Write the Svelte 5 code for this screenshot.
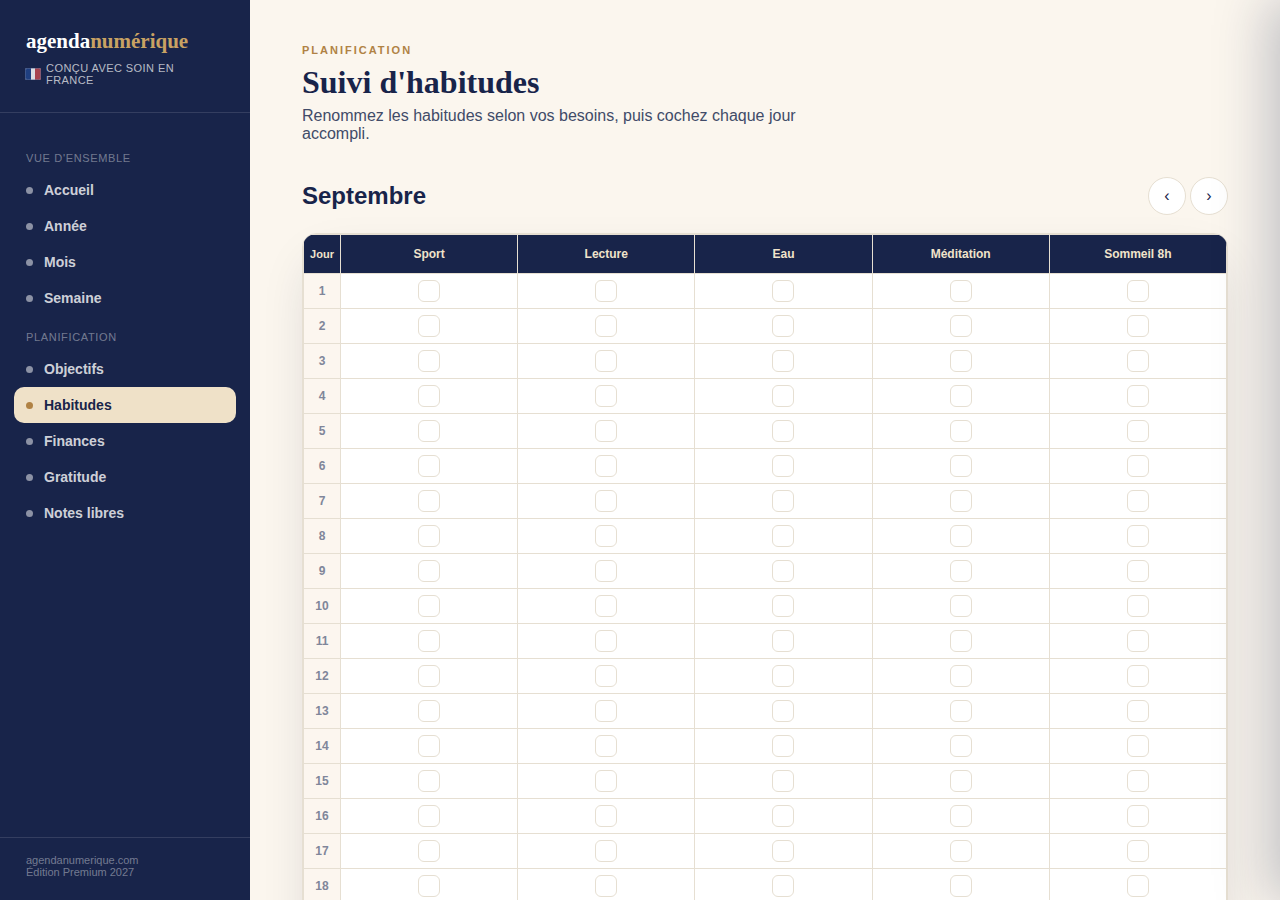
<script lang="ts">
    const groups = [
        { title: "Vue d'ensemble", items: ['Accueil', 'Année', 'Mois', 'Semaine'] },
        { title: 'Planification', items: ['Objectifs', 'Habitudes', 'Finances', 'Gratitude', 'Notes libres'] }
    ];
    const months = ['Janvier', 'Février', 'Mars', 'Avril', 'Mai', 'Juin', 'Juillet', 'Août', 'Septembre', 'Octobre', 'Novembre', 'Décembre'];

    let active = $state('Habitudes');
    let month = $state(8);
    let habits = $state(['Sport', 'Lecture', 'Eau', 'Méditation', 'Sommeil 8h']);
    let done: Record<string, boolean> = $state({});

    let days = $derived(new Date(2027, month + 1, 0).getDate());

    function move(step: number) {
        month = (month + step + 12) % 12;
    }

    function open(e: Event, item: string) {
        e.preventDefault();
        active = item;
    }
</script>

<div class="app">
    <aside class="sidebar">
        <header class="brand">
            <div class="logo">agenda<span>numérique</span></div>
            <div class="origin">
                <svg class="flag" viewBox="0 0 16 12" aria-hidden="true">
                    <rect width="16" height="12" rx="2" fill="#dcdde3" />
                    <path d="M2 0h4v12H2a2 2 0 0 1-2-2V2a2 2 0 0 1 2-2z" fill="#1f3f80" />
                    <path d="M10 0h4a2 2 0 0 1 2 2v8a2 2 0 0 1-2 2h-4z" fill="#a8434f" />
                    <rect x="0.5" y="0.5" width="15" height="11" rx="2" fill="none" stroke="#5f6f95" stroke-opacity="0.5" />
                </svg>
                <span>Conçu avec soin en France</span>
            </div>
        </header>

        <nav>
            {#each groups as group}
                <div class="group">{group.title}</div>
                {#each group.items as item}
                    <a href="#{item}" class:active={active === item} onclick={(e) => open(e, item)}>
                        <i class="dot"></i>{item}
                    </a>
                {/each}
            {/each}
        </nav>

        <footer>agendanumerique.com<br />Édition Premium 2027</footer>
    </aside>

    <main>
        <div class="eyebrow">Planification</div>
        <h1>Suivi d'habitudes</h1>
        <p class="intro">Renommez les habitudes selon vos besoins, puis cochez chaque jour accompli.</p>

        <div class="toolbar">
            <h2>{months[month]}</h2>
            <div class="arrows">
                <button onclick={() => move(-1)}>‹</button>
                <button onclick={() => move(1)}>›</button>
            </div>
        </div>

        <div class="card">
            <table>
                <thead>
                    <tr>
                        <th class="day">Jour</th>
                        {#each habits as _, h}
                            <th id="habit-{h}"><input type="text" bind:value={habits[h]} aria-labelledby="habit-{h}" /></th>
                        {/each}
                    </tr>
                </thead>
                <tbody>
                    {#each { length: days } as _, d}
                        <tr>
                            <td class="day" id="day-{d}">{d + 1}</td>
                            {#each habits as _, h}
                                <td>
                                    <input type="checkbox" bind:checked={done[`${month}-${d}-${h}`]} aria-labelledby="habit-{h} day-{d}" />
                                </td>
                            {/each}
                        </tr>
                    {/each}
                </tbody>
            </table>
        </div>
    </main>
</div>

<!-- closed drawer, parked just past the right edge -->
<div class="drawer"></div>

<style>
    :global(body) {
        background: #fbf6ee;
    }

    .app {
        display: flex;
        align-items: flex-start;
        font-family: "Liberation Sans", Arial, sans-serif;
        color: #18244a;
    }

    .sidebar {
        position: sticky;
        top: 0;
        flex: 0 0 250px;
        height: 100vh;
        display: flex;
        flex-direction: column;
        background: #18244a;
    }

    .brand {
        padding: 28px 26px 26px;
        border-bottom: 1px solid rgba(255, 255, 255, 0.12);
    }

    .logo {
        font-family: "Liberation Serif", Georgia, serif;
        font-size: 21px;
        font-weight: 700;
        line-height: 26px;
        color: #fff;
    }

    .logo span {
        color: #c9a263;
    }

    .origin {
        display: flex;
        align-items: center;
        gap: 5px;
        margin-top: 8px;
        font-size: 11px;
        line-height: 12px;
        letter-spacing: 0.04em;
        text-transform: uppercase;
        color: rgba(255, 255, 255, 0.7);
    }

    .flag {
        flex: none;
        width: 16px;
        height: 12px;
        margin-left: -1px;
    }

    nav {
        flex: 1;
        padding: 24px 14px;
        overflow-y: auto;
    }

    .group {
        padding: 15px 12px 8px;
        font-size: 11px;
        line-height: 12px;
        letter-spacing: 0.06em;
        text-transform: uppercase;
        color: rgba(255, 255, 255, 0.4);
    }

    nav a {
        display: flex;
        align-items: center;
        gap: 11px;
        height: 36px;
        padding: 0 12px;
        border-radius: 10px;
        font-size: 14px;
        font-weight: 700;
        color: rgba(255, 255, 255, 0.8);
        text-decoration: none;
    }

    .dot {
        width: 7px;
        height: 7px;
        border-radius: 50%;
        background: rgba(255, 255, 255, 0.5);
    }

    nav a.active {
        background: #efe1c8;
        color: #18244a;
    }

    nav a.active .dot {
        background: #b08244;
    }

    footer {
        padding: 16px 26px 22px;
        border-top: 1px solid rgba(255, 255, 255, 0.12);
        font-size: 11px;
        line-height: 12px;
        color: rgba(255, 255, 255, 0.4);
    }

    main {
        flex: 1;
        min-width: 0;
        padding: 44px 52px;
    }

    .eyebrow {
        font-size: 11px;
        font-weight: 700;
        line-height: 12px;
        letter-spacing: 2px;
        text-transform: uppercase;
        color: #b08244;
    }

    h1 {
        margin: 8px 0 7px;
        font-family: "Liberation Serif", Georgia, serif;
        font-size: 32px;
        line-height: 36px;
    }

    .intro {
        max-width: 520px;
        margin: 0;
        font-size: 16px;
        line-height: 18px;
        color: #414b68;
    }

    .toolbar {
        display: flex;
        align-items: center;
        justify-content: space-between;
        margin: 34px 0 18px;
    }

    h2 {
        margin: 0;
        font-size: 24px;
        line-height: 28px;
    }

    .arrows {
        display: flex;
        gap: 4px;
    }

    .arrows button {
        width: 38px;
        height: 38px;
        padding: 0;
        border: 1px solid #e6dfd2;
        border-radius: 50%;
        background: #fff;
        font-family: inherit;
        font-size: 16px;
        color: #18244a;
        cursor: pointer;
    }

    .card {
        border: 1px solid #e6dfd2;
        border-radius: 14px;
        overflow: hidden;
        background: #fff;
        box-shadow: 0 20px 50px -16px rgba(24, 36, 74, 0.2);
    }

    table {
        width: 100%;
        border-collapse: collapse;
        table-layout: fixed;
    }

    th,
    td {
        height: 22px;
        padding: 6px;
        border: 1px solid #e6dfd2;
        text-align: center;
        font-size: 0;
    }

    th {
        height: 26px;
        background: #18244a;
        color: #f0e3cb;
    }

    .day {
        width: 24px;
        font-size: 11px;
        font-weight: 700;
    }

    td.day {
        background: #fcf6ef;
        font-size: 12px;
        color: #80869a;
    }

    th input {
        box-sizing: border-box;
        width: 100%;
        padding: 0;
        border: 0;
        outline: 0;
        background: none;
        font-family: inherit;
        font-size: 12px;
        font-weight: 700;
        text-align: center;
        color: inherit;
    }

    td input {
        appearance: none;
        width: 22px;
        height: 22px;
        margin: 0;
        border: 1px solid #e6dfd2;
        border-radius: 6px;
        background: #fff;
        vertical-align: middle;
        cursor: pointer;
    }

    td input:checked {
        background: #b08244;
        border-color: #b08244;
    }

    .drawer {
        position: fixed;
        top: 0;
        right: 0;
        bottom: 0;
        width: 420px;
        max-width: 100%;
        background: #fff;
        box-shadow: -12px 0 50px rgba(24, 36, 74, 0.25);
        transform: translateX(100%);
    }
</style>
